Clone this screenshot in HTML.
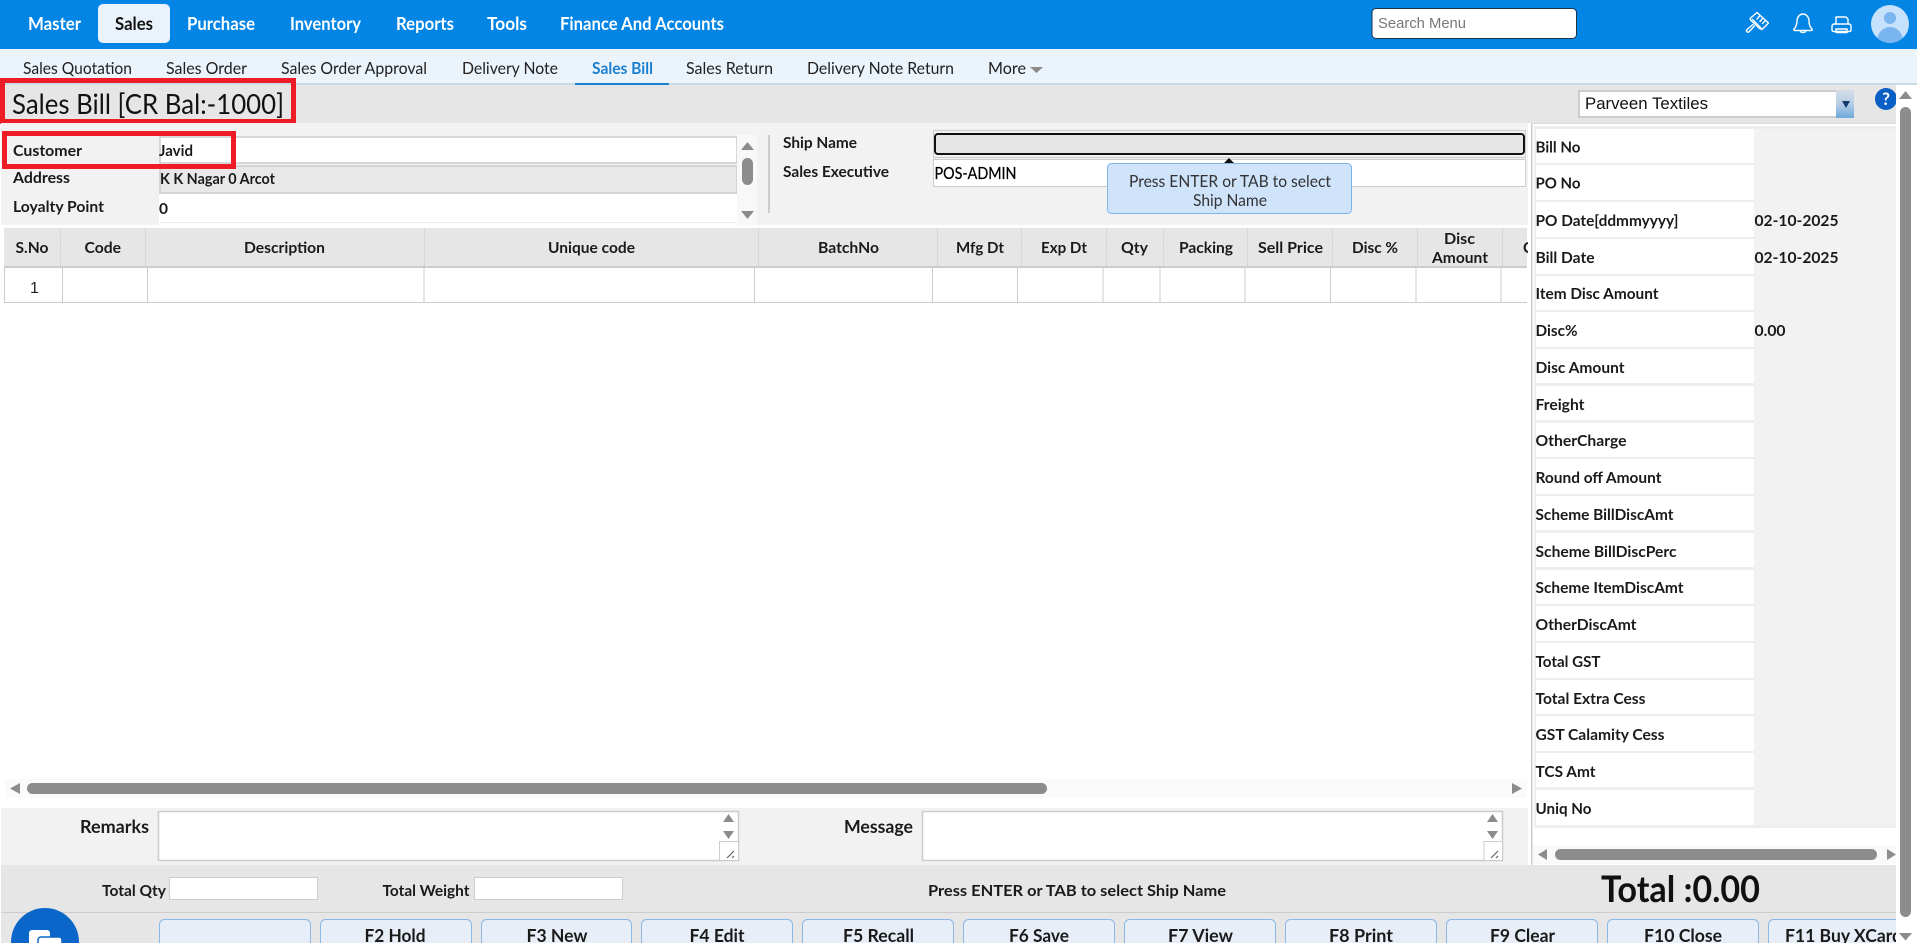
<!DOCTYPE html>
<html lang="en"><head><meta charset="utf-8"><title>Sales Bill</title>
<style>
html,body{margin:0;padding:0;width:1917px;height:943px;overflow:hidden;background:#fff}
svg{display:block}
text{font-family:"Lato","Carlito","Liberation Sans",sans-serif;fill:#111}
.n{font-size:18px;font-weight:700;fill:#fff}
.s{font-size:16px;fill:#222}
.l{font-size:15.5px;font-weight:700;fill:#1a1a1a}
.h{font-size:15.5px;font-weight:700;fill:#1a1a1a;text-anchor:start}
.b{font-size:18px;font-weight:700;fill:#1a1a1a}
</style></head><body>
<svg width="1917" height="943" viewBox="0 0 1917 943" xmlns="http://www.w3.org/2000/svg">
<!-- top nav -->
<rect width="1917" height="49" fill="#0285e5"/>
<rect x="98" y="4" width="72" height="39" rx="5" fill="#eaf3fb"/>
<text class="n" x="28" y="30" textLength="53" lengthAdjust="spacingAndGlyphs">Master</text>
<text class="n" x="115" y="30" textLength="38" lengthAdjust="spacingAndGlyphs" style="fill:#111">Sales</text>
<text class="n" x="187" y="30" textLength="68" lengthAdjust="spacingAndGlyphs">Purchase</text>
<text class="n" x="290" y="30" textLength="71" lengthAdjust="spacingAndGlyphs">Inventory</text>
<text class="n" x="396" y="30" textLength="58" lengthAdjust="spacingAndGlyphs">Reports</text>
<text class="n" x="487" y="30" textLength="40" lengthAdjust="spacingAndGlyphs">Tools</text>
<text class="n" x="560" y="30" textLength="164" lengthAdjust="spacingAndGlyphs">Finance And Accounts</text>
<rect x="1372" y="8.500" width="204.500" height="30" rx="4" fill="#fff" stroke="#234" stroke-width="1"/>
<text x="1378" y="28" font-size="15" style="font-family:'Liberation Sans',sans-serif;fill:#777" textLength="88" lengthAdjust="spacingAndGlyphs">Search Menu</text>
<g fill="none" stroke="#fff" stroke-width="1.400" stroke-linejoin="round" stroke-linecap="round">
<!-- brush -->
<path d="M1757 12.500L1768.500 23L1762 29.500L1759.500 28.500L1755.500 24.500L1751 20.500L1750 18.500Z"/>
<path d="M1752.500 19.500L1761 28M1760 15.500l-3 3.500M1763 18l-3 3.500M1765.500 20.500l-3 3"/>
<path d="M1753 24.500l-6 5c-1.500 1.500.5 3.700 2 2.200l5.500-5.700"/>
<!-- bell -->
<path d="M1794 29c2-2 3-4 3-8 0-4 3-7 6-7s6 3 6 7c0 4 1 6 3 8 .6.800 0 1.500-1 1.500h-16c-1 0-1.600-.7-1-1.500zM1800.500 31c0 2 5 2 5 0"/>
<!-- printer -->
<path d="M1836 24v-7h10l2 2v5M1834 24h15c1 0 2 1 2 2v4c0 1-1 1.500-2 1.500h-15c-1 0-2-.5-2-1.500v-4c0-1 1-2 2-2zM1836 29h11v3.500h-11z"/>
</g>
<clipPath id="av"><circle cx="1890" cy="24" r="19"/></clipPath>
<circle cx="1890" cy="24" r="19" fill="#c5e1fc"/>
<circle cx="1890" cy="18" r="6" fill="#79b5ee"/>
<g clip-path="url(#av)"><ellipse cx="1890" cy="41" rx="13" ry="14" fill="#79b5ee"/></g>
<!-- sub nav -->
<rect y="49" width="1917" height="34" fill="#ebf3fb"/>
<rect y="83" width="1917" height="2" fill="#cbdbe6"/>
<text class="s" x="23" y="74" textLength="109" lengthAdjust="spacingAndGlyphs">Sales Quotation</text>
<text class="s" x="166" y="74" textLength="81" lengthAdjust="spacingAndGlyphs">Sales Order</text>
<text class="s" x="281" y="74" textLength="146" lengthAdjust="spacingAndGlyphs">Sales Order Approval</text>
<text class="s" x="462" y="74" textLength="96" lengthAdjust="spacingAndGlyphs">Delivery Note</text>
<text class="s" x="592" y="74" textLength="61" lengthAdjust="spacingAndGlyphs" style="fill:#1b7fd0;font-weight:700">Sales Bill</text>
<rect x="575" y="83" width="94" height="2" fill="#1b7fd0"/>
<text class="s" x="686" y="74" textLength="87" lengthAdjust="spacingAndGlyphs">Sales Return</text>
<text class="s" x="807" y="74" textLength="147" lengthAdjust="spacingAndGlyphs">Delivery Note Return</text>
<text class="s" x="988" y="74" textLength="38" lengthAdjust="spacingAndGlyphs">More</text>
<path d="M1030 67h13l-6.500 6z" fill="#8a8a8a"/>
<!-- title bar -->
<rect y="85" width="1917" height="38" fill="#e6e6e6"/>
<rect x="2.500" y="80.500" width="291" height="41" fill="none" stroke="#ee1c25" stroke-width="5"/>
<text x="12" y="114" font-size="28" textLength="272" lengthAdjust="spacingAndGlyphs" style="fill:#111">Sales Bill [CR Bal:-1000]</text>
<rect x="1579" y="91" width="258" height="26" fill="#fff" stroke="#ccc" stroke-width="2"/>
<linearGradient id="sg" x1="0" y1="0" x2="0" y2="1"><stop offset="0" stop-color="#d5dee8"/><stop offset=".5" stop-color="#b5cde4"/><stop offset="1" stop-color="#6fa8dc"/></linearGradient>
<rect x="1836" y="90" width="18" height="28" fill="url(#sg)"/>
<path d="M1842 101h8l-4 7z" fill="#123a70"/>
<text x="1585" y="109" font-size="17" style="font-family:'Liberation Sans',sans-serif" textLength="123" lengthAdjust="spacingAndGlyphs">Parveen Textiles</text>
<circle cx="1886" cy="99" r="11" fill="#0a5fc4"/>
<text x="1886" y="105" font-size="17" font-weight="700" text-anchor="middle" style="fill:#fff">?</text>
<!-- form -->
<rect x="1" y="123" width="1530" height="102" fill="#f2f2f2"/>
<rect x="160" y="137" width="577" height="26" fill="#fff" stroke="#ccc" stroke-width="1.500"/>
<rect x="160" y="166" width="577" height="27" fill="#e8e8e8" stroke="#ccc" stroke-width="1.500"/>
<rect x="159" y="194" width="578" height="31" fill="#fff"/>
<rect x="159" y="222" width="578" height="1" fill="#eee"/>
<rect x="4.500" y="133.500" width="229" height="33" fill="none" stroke="#ee1c25" stroke-width="5"/>
<text class="l" x="13" y="156" textLength="69" lengthAdjust="spacingAndGlyphs">Customer</text>
<text class="l" x="13" y="183" textLength="57" lengthAdjust="spacingAndGlyphs">Address</text>
<text class="l" x="13" y="212" textLength="91" lengthAdjust="spacingAndGlyphs">Loyalty Point</text>
<text class="l" x="159" y="156" textLength="34" lengthAdjust="spacingAndGlyphs">Javid</text>
<text class="l" x="160" y="184" textLength="115" lengthAdjust="spacingAndGlyphs">K K Nagar 0 Arcot</text>
<text class="l" x="159" y="214" textLength="9" lengthAdjust="spacingAndGlyphs">0</text>
<rect x="737" y="135" width="20" height="90" fill="#f8f8f8"/>
<path d="M741 150l6.500-8 6.500 8zM741 211h13l-6.500 8z" fill="#8c8c8c"/>
<rect x="742" y="158" width="11" height="27" rx="5.500" fill="#8c8c8c"/>
<rect x="768" y="135" width="2" height="78" fill="#ccc"/>
<text class="l" x="783" y="148" textLength="74" lengthAdjust="spacingAndGlyphs">Ship Name</text>
<text class="l" x="783" y="177" textLength="106" lengthAdjust="spacingAndGlyphs">Sales Executive</text>
<rect x="933.500" y="130.500" width="592" height="27" fill="#f2f2f2" stroke="#ccc"/>
<rect x="935" y="134" width="589" height="20" rx="3" fill="#e6e6e6" stroke="#111" stroke-width="2"/>
<rect x="933.500" y="159.500" width="592" height="27" fill="#fff" stroke="#ccc"/>
<text x="934.500" y="179" font-size="16" textLength="82" lengthAdjust="spacingAndGlyphs" style="fill:#000;stroke:#000;stroke-width:.25">POS-ADMIN</text>
<!-- table -->
<rect x="4" y="228" width="1523" height="38" fill="#e6e6e6"/>
<rect x="4" y="266" width="1523" height="2" fill="#ccc"/>
<path d="M60.500 228v38M145.500 228v38M424.500 228v38M758.500 228v38M937.500 228v38M1021.500 228v38M1106.500 228v38M1163.500 228v38M1247.500 228v38M1332.500 228v38M1417.500 228v38M1502.500 228v38" stroke="#d0d0d0" stroke-dasharray="2 1"/>
<text class="h" x="15.500" y="253" textLength="33" lengthAdjust="spacingAndGlyphs">S.No</text>
<text class="h" x="84.500" y="253" textLength="36.500" lengthAdjust="spacingAndGlyphs">Code</text>
<text class="h" x="244" y="253" textLength="81" lengthAdjust="spacingAndGlyphs">Description</text>
<text class="h" x="548" y="253" textLength="87" lengthAdjust="spacingAndGlyphs">Unique code</text>
<text class="h" x="818" y="253" textLength="61" lengthAdjust="spacingAndGlyphs">BatchNo</text>
<text class="h" x="956" y="253" textLength="48" lengthAdjust="spacingAndGlyphs">Mfg Dt</text>
<text class="h" x="1041" y="253" textLength="46" lengthAdjust="spacingAndGlyphs">Exp Dt</text>
<text class="h" x="1121" y="253" textLength="27" lengthAdjust="spacingAndGlyphs">Qty</text>
<text class="h" x="1179" y="253" textLength="54" lengthAdjust="spacingAndGlyphs">Packing</text>
<text class="h" x="1258" y="253" textLength="65" lengthAdjust="spacingAndGlyphs">Sell Price</text>
<text class="h" x="1352" y="253" textLength="46" lengthAdjust="spacingAndGlyphs">Disc %</text>
<text class="h" x="1444" y="244" textLength="31" lengthAdjust="spacingAndGlyphs">Disc</text>
<text class="h" x="1432" y="263" textLength="56" lengthAdjust="spacingAndGlyphs">Amount</text>
<text class="h" x="1523" y="253">Cost</text>
<path d="M4.500 268v34.500H1527M62.500 268v34M147.500 268v34M424 268v34M754.500 268v34M932.500 268v34M1017.500 268v34M1103 268v34M1160 268v34M1245 268v34M1330.500 268v34M1416 268v34M1501 268v34" fill="none" stroke="#ccc"/>
<text x="30" y="293" font-size="16" style="font-family:'Liberation Sans',sans-serif;fill:#222">1</text>
<rect x="5" y="779" width="1522" height="19" fill="#fafafa"/>
<path d="M20 783v11l-10-5.500zM1512 783v11l10-5.500z" fill="#8c8c8c"/>
<rect x="27" y="783" width="1020" height="11" rx="5.500" fill="#8c8c8c"/>
<!-- tooltip -->
<path d="M1224 163l5-5 5 5z" fill="#111"/>
<rect x="1107.500" y="163.500" width="244" height="50" rx="4" fill="#cfe3fb" stroke="#7db4ea"/>
<text x="1129" y="187" font-size="16" textLength="202" lengthAdjust="spacingAndGlyphs" style="fill:#333">Press ENTER or TAB to select</text>
<text x="1193" y="206" font-size="16" textLength="74" lengthAdjust="spacingAndGlyphs" style="fill:#333">Ship Name</text>
<!-- remarks -->
<rect x="1" y="808" width="1530" height="57" fill="#f2f2f2"/>
<text class="b" x="80" y="833" textLength="69" lengthAdjust="spacingAndGlyphs">Remarks</text>
<rect x="158.500" y="811.500" width="580" height="49" fill="#fff" stroke="#ccc" stroke-width="1.500"/>
<path d="M723 822l5.500-8 5.500 8zM723 831h11l-5.500 8z" fill="#8c8c8c"/>
<rect x="719.500" y="841.500" width="19" height="19" fill="#fff" stroke="#ccc"/>
<path d="M727 858l7-7M732 858l2-2" stroke="#555" stroke-width="1"/>
<text class="b" x="844" y="833" textLength="69" lengthAdjust="spacingAndGlyphs">Message</text>
<rect x="922.500" y="811.500" width="580" height="49" fill="#fff" stroke="#ccc" stroke-width="1.500"/>
<path d="M1487 822l5.500-8 5.500 8zM1487 831h11l-5.500 8z" fill="#8c8c8c"/>
<rect x="1484" y="841.500" width="18.500" height="19" fill="#fff" stroke="#ccc"/>
<path d="M1491 858l7-7M1496 858l2-2" stroke="#555" stroke-width="1"/>
<!-- right panel -->
<rect x="1528" y="123" width="368" height="742" fill="#fff"/>
<rect x="1531" y="123" width="1.500" height="742" fill="#ccc"/>
<rect x="1531" y="123" width="365" height="1" fill="#ddd"/>
<rect x="1534" y="126" width="362" height="702" fill="#eeeeee"/>
<rect x="1754" y="129" width="142" height="696" fill="#f2f2f2"/>
<g fill="#fff">
<rect x="1536" y="129" width="218" height="34"/><rect x="1536" y="165" width="218" height="35"/><rect x="1536" y="202" width="218" height="35"/><rect x="1536" y="239" width="218" height="35"/><rect x="1536" y="276" width="218" height="34"/><rect x="1536" y="312" width="218" height="35"/><rect x="1536" y="349" width="218" height="34"/><rect x="1536" y="386" width="218" height="34"/><rect x="1536" y="423" width="218" height="34"/><rect x="1536" y="459" width="218" height="35"/><rect x="1536" y="496" width="218" height="34"/><rect x="1536" y="533" width="218" height="34"/><rect x="1536" y="570" width="218" height="34"/><rect x="1536" y="606" width="218" height="35"/><rect x="1536" y="643" width="218" height="35"/><rect x="1536" y="680" width="218" height="34"/><rect x="1536" y="716" width="218" height="35"/><rect x="1536" y="753" width="218" height="34"/><rect x="1536" y="790" width="218" height="35"/>
</g>
<g>
<text class="l" x="1535.500" y="152.500" textLength="45" lengthAdjust="spacingAndGlyphs">Bill No</text>
<text class="l" x="1535.500" y="188.500" textLength="45" lengthAdjust="spacingAndGlyphs">PO No</text>
<text class="l" x="1535.500" y="226" textLength="143" lengthAdjust="spacingAndGlyphs">PO Date[ddmmyyyy]</text>
<text class="l" x="1535.500" y="263" textLength="59" lengthAdjust="spacingAndGlyphs">Bill Date</text>
<text class="l" x="1535.500" y="299" textLength="123" lengthAdjust="spacingAndGlyphs">Item Disc Amount</text>
<text class="l" x="1535.500" y="336" textLength="42" lengthAdjust="spacingAndGlyphs">Disc%</text>
<text class="l" x="1535.500" y="373" textLength="89" lengthAdjust="spacingAndGlyphs">Disc Amount</text>
<text class="l" x="1535.500" y="410" textLength="49" lengthAdjust="spacingAndGlyphs">Freight</text>
<text class="l" x="1535.500" y="446" textLength="91" lengthAdjust="spacingAndGlyphs">OtherCharge</text>
<text class="l" x="1535.500" y="483" textLength="126" lengthAdjust="spacingAndGlyphs">Round off Amount</text>
<text class="l" x="1535.500" y="520" textLength="138" lengthAdjust="spacingAndGlyphs">Scheme BillDiscAmt</text>
<text class="l" x="1535.500" y="557" textLength="141" lengthAdjust="spacingAndGlyphs">Scheme BillDiscPerc</text>
<text class="l" x="1535.500" y="593" textLength="148" lengthAdjust="spacingAndGlyphs">Scheme ItemDiscAmt</text>
<text class="l" x="1535.500" y="630" textLength="101" lengthAdjust="spacingAndGlyphs">OtherDiscAmt</text>
<text class="l" x="1535.500" y="667" textLength="65" lengthAdjust="spacingAndGlyphs">Total GST</text>
<text class="l" x="1535.500" y="704" textLength="110" lengthAdjust="spacingAndGlyphs">Total Extra Cess</text>
<text class="l" x="1535.500" y="740" textLength="129" lengthAdjust="spacingAndGlyphs">GST Calamity Cess</text>
<text class="l" x="1535.500" y="777" textLength="60" lengthAdjust="spacingAndGlyphs">TCS Amt</text>
<text class="l" x="1535.500" y="814" textLength="56" lengthAdjust="spacingAndGlyphs">Uniq No</text>
<text class="l" x="1754.500" y="226" textLength="84" lengthAdjust="spacingAndGlyphs">02-10-2025</text>
<text class="l" x="1754.500" y="263" textLength="84" lengthAdjust="spacingAndGlyphs">02-10-2025</text>
<text class="l" x="1754.500" y="336" textLength="31" lengthAdjust="spacingAndGlyphs">0.00</text>
</g>
<rect x="1533" y="828" width="363" height="37" fill="#fff"/>
<rect x="1533" y="845" width="363" height="19" fill="#fafafa"/>
<path d="M1547 849v11l-9-5.500zM1887 849v11l9-5.500z" fill="#8c8c8c"/>
<rect x="1555" y="849" width="322" height="11" rx="5.500" fill="#8c8c8c"/>
<!-- bottom bar -->
<rect x="1" y="865" width="1895" height="78" fill="#e6e6e6"/>
<rect x="1" y="912" width="1895" height="1" fill="#ccc"/>
<text class="l" x="102" y="896" textLength="64" lengthAdjust="spacingAndGlyphs">Total Qty</text>
<rect x="169.500" y="877.500" width="148" height="22" fill="#fff" stroke="#ccc"/>
<text class="l" x="382.500" y="896" textLength="87" lengthAdjust="spacingAndGlyphs">Total Weight</text>
<rect x="474.500" y="877.500" width="148" height="22" fill="#fff" stroke="#ccc"/>
<text class="l" x="928" y="896" textLength="298" lengthAdjust="spacingAndGlyphs">Press ENTER or TAB to select Ship Name</text>
<text x="1601" y="902" font-size="36" font-weight="700" textLength="159" lengthAdjust="spacingAndGlyphs">Total :0.00</text>
<circle cx="45" cy="942" r="34" fill="#0a66c8"/>
<rect x="29" y="930" width="21" height="20" rx="3" fill="#fff"/>
<rect x="38" y="937" width="24" height="20" rx="3" fill="#fff" stroke="#0a66c8" stroke-width="1.500"/>
<g fill="#e8eef7" stroke="#8ab8e8">
<rect x="159.500" y="919.500" width="151" height="40" rx="5"/><rect x="320.500" y="919.500" width="151" height="40" rx="5"/><rect x="481.500" y="919.500" width="150" height="40" rx="5"/><rect x="641.500" y="919.500" width="151" height="40" rx="5"/><rect x="802.500" y="919.500" width="151" height="40" rx="5"/><rect x="963.500" y="919.500" width="151" height="40" rx="5"/><rect x="1124.500" y="919.500" width="151" height="40" rx="5"/><rect x="1285.500" y="919.500" width="151" height="40" rx="5"/><rect x="1446.500" y="919.500" width="151" height="40" rx="5"/><rect x="1607.500" y="919.500" width="151" height="40" rx="5"/><rect x="1768.500" y="919.500" width="151" height="40" rx="5"/>
</g>
<text class="b" x="364.500" y="942" textLength="61" lengthAdjust="spacingAndGlyphs">F2 Hold</text>
<text class="b" x="526.500" y="942" textLength="61" lengthAdjust="spacingAndGlyphs">F3 New</text>
<text class="b" x="689.500" y="942" textLength="55" lengthAdjust="spacingAndGlyphs">F4 Edit</text>
<text class="b" x="843" y="942" textLength="71" lengthAdjust="spacingAndGlyphs">F5 Recall</text>
<text class="b" x="1009" y="942" textLength="60" lengthAdjust="spacingAndGlyphs">F6 Save</text>
<text class="b" x="1168" y="942" textLength="65" lengthAdjust="spacingAndGlyphs">F7 View</text>
<text class="b" x="1329" y="942" textLength="64" lengthAdjust="spacingAndGlyphs">F8 Print</text>
<text class="b" x="1490" y="942" textLength="65" lengthAdjust="spacingAndGlyphs">F9 Clear</text>
<text class="b" x="1644" y="942" textLength="78" lengthAdjust="spacingAndGlyphs">F10 Close</text>
<text class="b" x="1785" y="942" textLength="117" lengthAdjust="spacingAndGlyphs">F11 Buy XCard</text>
<!-- page scrollbar -->
<rect x="1896" y="85" width="21" height="858" fill="#fff"/>
<path d="M1899 99l6.500-8 6.500 8zM1899 933h13l-6.500 7.500z" fill="#8c8c8c"/>
<rect x="1900" y="107" width="11" height="810" rx="5.500" fill="#8c8c8c"/>
</svg>
</body></html>
